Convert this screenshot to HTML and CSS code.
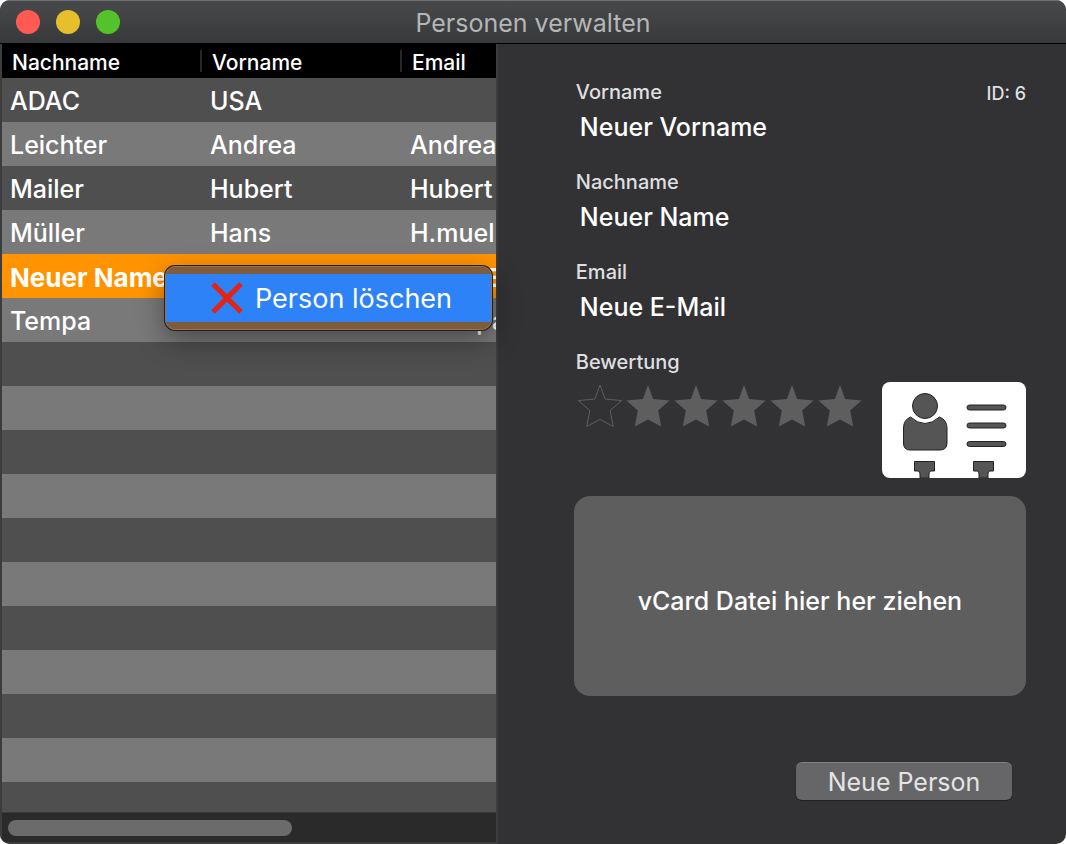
FILE: index.html
```html
<!DOCTYPE html>
<html lang="de">
<head>
    <meta charset="UTF-8">
    <meta name="viewport" content="width=device-width, initial-scale=1.0">
    <title>Personen verwalten</title>
    <link rel="stylesheet" href="styles.css">
</head>
<body>
    <svg class="symbols" aria-hidden="true">
        <symbol id="star" viewBox="0 0 48 48">
            <path d="M24 3 L29.2 17 L45.6 18.6 L34.2 28.4 L37.2 44.4 L24 37.4 L10.8 44.4 L13.8 28.4 L2.4 18.6 L18.8 17 Z"/>
        </symbol>
    </svg>

    <div class="window">
        <header class="titlebar">
            <div class="window-buttons">
                <button class="dot dot-close" aria-label="Schließen"></button>
                <button class="dot dot-minimize" aria-label="Minimieren"></button>
                <button class="dot dot-zoom" aria-label="Zoomen"></button>
            </div>
            <h1 class="title">Personen verwalten</h1>
        </header>

        <main class="content">
            <section class="list-pane">
                <div class="table-wrap">
                    <table class="persons">
                        <thead>
                            <tr><th>Nachname</th><th>Vorname</th><th>Email</th></tr>
                        </thead>
                        <tbody>
                            <tr><td>ADAC</td><td>USA</td><td></td></tr>
                            <tr><td>Leichter</td><td>Andrea</td><td>Andrea</td></tr>
                            <tr><td>Mailer</td><td>Hubert</td><td>Hubert</td></tr>
                            <tr><td>Müller</td><td>Hans</td><td>H.muel</td></tr>
                            <tr class="selected"><td>Neuer Name</td><td></td><td>Neue E-Mail</td></tr>
                            <tr><td>Tempa</td><td></td><td>s.tempa</td></tr>
                        </tbody>
                    </table>
                </div>
                <div class="scroll-track"><div class="scroll-thumb"></div></div>

                <div class="context-menu">
                    <button class="menu-item">
                        <svg class="menu-icon" viewBox="0 0 32 32" aria-hidden="true">
                            <path d="M2 2 L30 30 M30 2 L2 30" stroke="#e62310" stroke-width="5"/>
                        </svg>
                        Person löschen
                    </button>
                </div>
            </section>

            <form class="detail-pane">
                <div class="field">
                    <div class="field-head">
                        <label for="vorname">Vorname</label>
                        <span class="person-id">ID: 6</span>
                    </div>
                    <input id="vorname" type="text" value="Neuer Vorname">
                </div>
                <div class="field">
                    <div class="field-head"><label for="nachname">Nachname</label></div>
                    <input id="nachname" type="text" value="Neuer Name">
                </div>
                <div class="field">
                    <div class="field-head"><label for="email">Email</label></div>
                    <input id="email" type="text" value="Neue E-Mail">
                </div>

                <div class="field-head" id="rating-label">Bewertung</div>
                <div class="rating-row">
                    <div class="stars" role="radiogroup" aria-labelledby="rating-label">
                        <label class="star star-empty"><input type="radio" name="rating" value="0" aria-label="0"><svg><use href="#star"/></svg></label>
                        <label class="star"><input type="radio" name="rating" value="1" aria-label="1"><svg><use href="#star"/></svg></label>
                        <label class="star"><input type="radio" name="rating" value="2" aria-label="2"><svg><use href="#star"/></svg></label>
                        <label class="star"><input type="radio" name="rating" value="3" aria-label="3"><svg><use href="#star"/></svg></label>
                        <label class="star"><input type="radio" name="rating" value="4" aria-label="4"><svg><use href="#star"/></svg></label>
                        <label class="star"><input type="radio" name="rating" value="5" aria-label="5"><svg><use href="#star"/></svg></label>
                    </div>
                    <svg class="card-icon" viewBox="0 0 144 96" aria-hidden="true">
                        <rect width="144" height="96" rx="8" fill="#fff"/>
                        <g fill="#555" stroke="#222" stroke-width="1">
                            <circle cx="43" cy="24" r="12.5"/>
                            <path d="M28.500 35 Q43 48 57.500 35 Q65 38 65 46 V61 Q65 68 58 68 H28 Q21.500 68 21.500 61 V46 Q21.500 38 28.500 35 Z"/>
                            <rect x="85" y="23" width="39" height="5" rx="2.500"/>
                            <rect x="85" y="41" width="39" height="5" rx="2.500"/>
                            <rect x="85" y="59.500" width="39" height="5" rx="2.500"/>
                            <path d="M32.500 79.500 H52.500 V89 H49 Q47 89 47 92 V96 H38 V92 Q38 89 36 89 H32.500 Z"/>
                            <path d="M91.500 79.500 H111.500 V89 H108 Q106 89 106 92 V96 H97 V92 Q97 89 95 89 H91.500 Z"/>
                        </g>
                    </svg>
                </div>

                <div class="drop-zone">vCard Datei hier her ziehen</div>
                <button type="button" class="new-person">Neue Person</button>
            </form>
        </main>
    </div>
</body>
</html>
```

FILE: styles.css
```css
* {
    box-sizing: border-box;
}

body {
    margin: 0;
    background: #fff;
    font-family: Inter, 'Liberation Sans', sans-serif;
    font-size: 25px;
    font-weight: 500;
    color: #fff;
}

button,
input {
    font: inherit;
    color: inherit;
    border: 0;
    padding: 0;
    margin: 0;
}

.symbols {
    display: none;
}

.window {
    display: flex;
    flex-direction: column;
    min-height: 100vh;
    background: #323234;
    border-radius: 10px;
    overflow: hidden;
}

/* Title bar */
.titlebar {
    display: grid;
    grid-template-columns: 1fr auto 1fr;
    align-items: center;
    height: 44px;
    padding: 0 16px;
    background: linear-gradient(#48494b, #38393b);
    border-top: 1px solid #707173;
    border-bottom: 1px solid #000;
}

.window-buttons {
    display: flex;
    gap: 16px;
}

.dot {
    width: 24px;
    height: 24px;
    border-radius: 50%;
}

.dot-close {
    background: #ff5b54;
}

.dot-minimize {
    background: #e6bf2c;
}

.dot-zoom {
    background: #54c22b;
}

.title {
    margin: 0;
    padding-top: 2px;
    font-size: 25px;
    font-weight: 400;
    color: #b5b6b7;
}

.content {
    display: grid;
    grid-template-columns: 46.7% minmax(0, 1fr);
    flex: 1;
}

/* Person list */
.list-pane {
    position: relative;
    display: flex;
    flex-direction: column;
    border: solid #3c3c3d;
    border-width: 0 2px 2px;
}

.table-wrap {
    flex: 1;
    overflow: hidden;
    background: repeating-linear-gradient(#4f4f4f 0 44px, #797979 44px 88px) 0 34px no-repeat;
}

.persons {
    width: 600px;
    table-layout: fixed;
    border-collapse: collapse;
}

.persons th {
    height: 34px;
    padding: 2px 10px 0;
    background: #000 linear-gradient(#262626, #262626) right center / 2px 22px no-repeat;
    font-size: 21px;
    font-weight: 500;
    text-align: left;
}

.persons td {
    height: 44px;
    padding: 2px 8px 0;
    white-space: nowrap;
}

.persons .selected {
    background: #ff9300;
    font-size: 26px;
    font-weight: 700;
}

.scroll-track {
    height: 30px;
    padding: 7px 6px;
    background: #2a2a2a;
    border-top: 1px solid #3a3a3a;
}

.scroll-thumb {
    width: 59%;
    height: 16px;
    border-radius: 8px;
    background: #6b6b6b;
}

.context-menu {
    position: absolute;
    top: 222px;
    left: 163px;
    width: 327px;
    padding: 7px 0;
    background: #7e5c3c;
    border: 1px solid #967450;
    border-radius: 10px;
    box-shadow: 0 0 0 1px #222, 0 10px 28px rgba(0, 0, 0, 0.4);
}

.menu-item {
    display: flex;
    align-items: center;
    gap: 12px;
    width: 100%;
    height: 48px;
    padding-left: 45px;
    background: #2c82f6;
    font-size: 27px;
    font-weight: 400;
}

.menu-icon {
    width: 32px;
    height: 32px;
}

/* Detail form */
.detail-pane {
    display: flex;
    flex-direction: column;
    padding: 34px 40px 44px 76px;
}

.field {
    height: 90px;
}

.field-head {
    display: flex;
    justify-content: space-between;
    height: 28px;
    padding-left: 2px;
    font-size: 20px;
    line-height: 28px;
    color: #dfdfe0;
}

.person-id {
    font-size: 18px;
    line-height: 32px;
}

.field input {
    display: block;
    width: 100%;
    height: 42px;
    padding: 0 6px;
    background: none;
}

.rating-row {
    display: flex;
    justify-content: space-between;
    margin-top: 6px;
}

.stars {
    display: flex;
    padding-left: 2px;
}

.star {
    position: relative;
    width: 48px;
    height: 48px;
}

.star input {
    position: absolute;
    inset: 0;
    opacity: 0;
}

.star svg {
    display: block;
    width: 48px;
    height: 48px;
    fill: #5e5e5e;
}

.star-empty svg {
    fill: none;
    stroke: #5e5e5e;
}

.card-icon {
    width: 144px;
    height: 96px;
}

.drop-zone {
    display: flex;
    align-items: center;
    justify-content: center;
    height: 200px;
    margin-top: 18px;
    padding-top: 10px;
    background: #5e5e5e;
    border-radius: 16px;
}

.new-person {
    align-self: flex-end;
    width: 216px;
    height: 38px;
    margin: 66px 14px 0 0;
    background: #666668;
    border-top: 1px solid #828284;
    border-radius: 6px;
    box-shadow: 0 1px 1px rgba(0, 0, 0, 0.4);
    font-weight: 400;
    color: #e4e4e5;
}
```
